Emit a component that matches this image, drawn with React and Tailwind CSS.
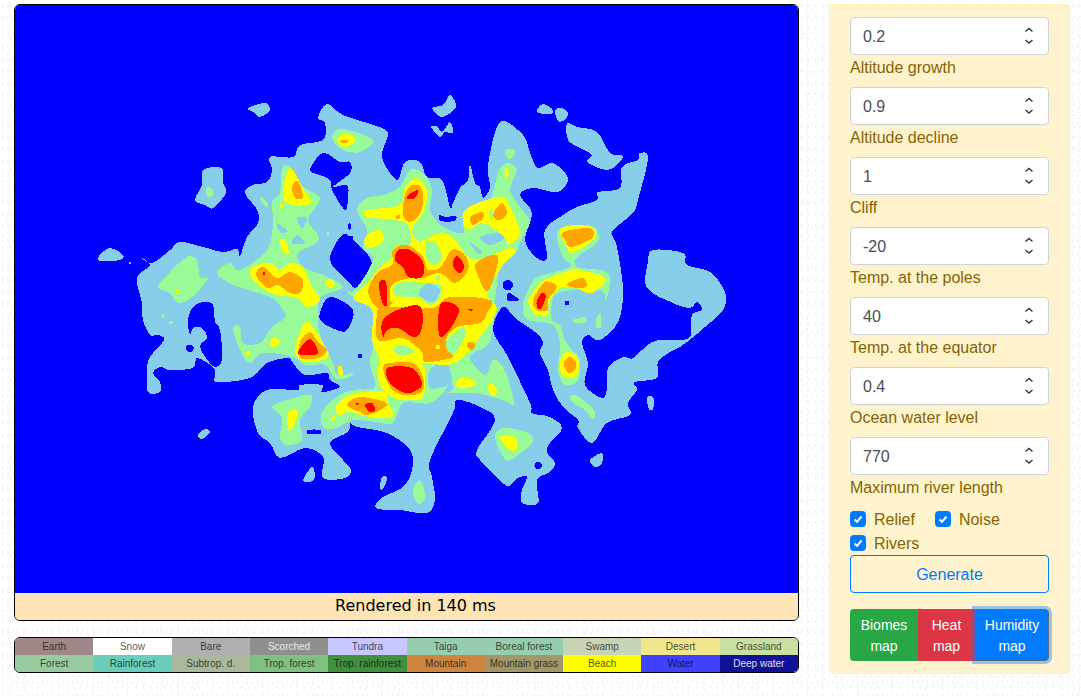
const SKY = "#87ceeb";
const GREEN = "#98fb98";
const YELLOW = "#ffff00";
const ORANGE = "#ffa500";
const RED = "#ff0000";
const WATER = "#0000ff";

// map shapes in page coordinates, painted bottom to top
const layers = [
  [SKY, [
    "137,278 150,265 140,257 152,263 170,250 180,242 203,247 223,252 237,249 240,256 247,237 258,223 257,210 245,193 253,185 267,182 272,170 270,157 293,157 300,145 323,140 325,123 318,118 327,104 343,115 373,125 388,133 382,157 397,180 405,162 420,162 427,177 442,180 450,207 453,203 460,188 468,180 470,165 475,183 480,187 483,198 490,187 488,165 500,122 523,135 530,153 538,168 553,163 568,178 558,192 533,188 520,195 532,213 525,240 537,258 547,258 545,230 563,215 577,207 597,200 598,192 620,188 622,167 638,160 640,153 648,158 638,200 633,213 613,230 613,237 617,247 623,290 618,322 600,340 588,335 582,343 588,363 585,385 602,398 607,388 608,368 623,357 633,358 652,342 673,340 690,337 692,315 702,310 697,302 690,308 673,303 647,288 648,262 653,250 683,253 687,265 710,272 725,292 723,310 705,327 692,338 680,347 670,352 658,362 657,378 635,382 637,390 628,403 630,415 607,423 592,443 578,428 578,420 563,407 553,390 548,370 540,353 543,342 535,332 515,318 503,307 493,330 508,357 530,403 532,413 550,417 562,428 550,443 547,452 555,463 550,472 537,480 538,503 522,503 522,490 527,477 518,478 507,486 490,470 480,460 477,450 495,420 480,407 457,400 453,413 430,460 432,477 435,500 427,513 400,510 387,510 375,507 383,497 403,487 412,470 410,450 387,433 357,427 350,423 348,432 330,443 343,460 351,470 345,478 323,478 323,457 305,448 280,458 270,443 258,433 253,407 267,390 297,390 300,385 322,385 322,392 340,387 330,380 327,373 305,375 293,363 288,358 267,363 250,378 217,382 215,375 213,367 197,358 193,368 170,370 160,367 153,373 160,382 160,392 148,392 147,370 150,357 164,340 158,335 150,335 143,320 142,303",
    "248,108 265,103 270,110 260,117 253,112",
    "195,200 202,185 203,170 222,168 223,182 226,193 213,208 205,205",
    "99,256 110,248 123,255 120,260 100,261",
    "432,108 443,105 450,95 456,107 442,117",
    "431,127 437,126 442,132 450,122 453,133 445,132 440,137",
    "537,112 543,104 553,110 550,114",
    "555,110 562,108 568,113 565,120 558,121",
    "567,123 577,127 597,132 610,153 622,155 620,162 607,170 587,162 592,155 580,148 568,140",
    "647,397 654,398 653,409 649,409",
    "590,460 602,453 602,463 595,467",
    "198,435 205,429 210,432 202,439",
    "303,480 312,467 315,477 310,482",
    "380,488 382,477 387,478 383,489",
  ]],
  [WATER, [
    "188,320 193,307 203,302 213,305 215,322 220,330 222,360 213,366 200,347 207,338 202,328 193,328 190,335",
    "310,170 323,153 340,162 350,162 350,173 333,187 347,185 348,197 345,210 332,190 330,180 320,175",
    "330,260 342,235 353,240 372,263 357,287 347,280",
    "320,313 330,297 353,310 347,330 337,330 322,322",
    "348,224 351,224 351,229 348,229",
    "349,236 353,236 353,240 349,240",
    "380,258 386,258 386,264 380,264",
    "186,346 191,345 194,348 191,352 187,351",
    "286,347 292,344 295,349 292,354 287,353",
    "358,354 362,354 362,358 358,358",
    "308,430 320,430 320,434 308,434",
    "439,215 446,217 456,216 454,221 441,221",
    "503,283 508,280 513,284 510,290 504,289",
    "508,293 513,295 519,300 508,301",
    "565,301 569,301 569,305 565,305",
    "535,463 540,462 542,466 539,469 535,468",
  ]],
  [GREEN, [
    "282,168 290,167 303,187 320,198 308,220 317,233 317,243 298,253 303,267 323,275 343,287 320,297 318,308 318,325 322,340 333,363 337,375 353,373 347,378 335,378 325,365 305,365 293,357 263,353 250,363 240,350 233,328 240,327 243,343 260,343 272,327 285,318 283,310 272,298 248,290 227,282 217,272 230,263 240,270 267,250 273,223 272,202 280,193",
    "357,210 367,198 383,195 400,187 410,170 423,173 432,190 430,210 443,227 463,233 463,220 470,207 490,200 498,173 507,163 517,170 510,190 520,207 530,222 522,237 515,253 500,265 497,283 493,317 492,330 488,345 470,357 485,375 493,360 503,367 510,385 514,405 505,401 477,393 450,393 453,387 447,363 430,370 430,388 447,387 430,403 403,403 393,423 377,422 353,420 337,428 323,427 322,412 337,397 353,390 375,387 370,363 375,340 377,320 372,303 355,298 347,290 355,290 373,260 363,247 367,230",
    "538,277 570,267 563,257 557,237 563,227 587,225 597,230 597,243 577,257 577,267 600,270 610,277 606,300 600,290 560,292 552,303 552,320 560,325 565,340 572,350 580,360 578,380 565,385 558,370 560,345 553,325 528,320 523,310 525,297 532,283",
    "158,287 170,272 187,257 197,260 200,277 208,279 192,297 178,303 170,293",
    "272,407 287,400 310,395 310,407 300,420 302,440 287,445 280,437 282,418",
    "413,490 420,480 425,493 423,502 417,503",
    "495,437 503,428 528,433 532,443 510,460 502,455",
    "570,397 575,395 587,403 595,412 593,419 585,410 573,403",
    "505,150 515,150 512,158 507,158",
    "332,138 342,129 373,140 360,152 343,150",
    "207,187 213,190 212,196 207,196",
    "573,320 585,317 585,323 575,323",
    "597,317 601,313 601,327 596,327",
    "260,198 263,198 268,205 265,206",
    "161,315 164,314 165,318 162,318",
    "169,322 173,321 172,324 169,324",
    "327,232 329,232 329,236 327,236",
  ]],
  [SKY, [
    "277,223 287,231 280,232",
    "297,218 307,218 302,228",
    "292,243 297,235 305,243",
    "480,237 497,233 505,238 490,245",
    "470,242 482,252 477,253",
  ]],
  [YELLOW, [
    "367,217 367,210 400,205 405,187 417,178 427,192 423,213 413,228 423,240 440,233 453,238 470,258 487,257 510,248 515,253 503,265 488,290 490,300 497,310 483,333 455,363 423,363 425,370 423,397 407,400 393,398 382,388 377,370 380,361 372,340 372,310 353,298 368,283 378,270 392,257 395,247 410,245 408,225 395,220",
    "338,403 357,393 385,392 387,400 393,417 370,417 350,412 338,415",
    "365,237 380,230 383,242 368,248",
    "463,213 478,203 503,197 510,207 520,233 508,245 505,237 483,223 467,230",
    "505,168 509,170 507,178 505,177",
    "560,230 577,225 593,228 595,238 573,253 567,247",
    "537,287 545,280 570,270 580,270 605,278 597,290 588,293 573,287 557,290 548,307 548,315 537,315 528,302",
    "287,172 293,170 302,187 312,203 293,205 283,197",
    "280,205 283,204 284,208 281,209",
    "280,240 285,240 289,253 283,252",
    "250,275 257,265 272,263 280,270 290,263 303,268 312,287 320,300 307,307 297,298 270,293",
    "325,282 330,279 335,284 330,288",
    "337,140 345,133 356,140 345,147",
    "176,290 179,291 181,294 176,294",
    "300,332 308,322 323,343 328,357 307,362 295,353",
    "270,342 275,337 280,342 273,347",
    "246,352 250,351 249,356 246,355",
    "338,367 341,366 343,374 339,375",
    "288,413 297,410 297,417 292,429 288,428",
    "331,419 335,416 335,419 332,421",
    "457,380 465,377 476,383 467,388 457,387",
    "488,388 493,383 497,392 492,396",
    "499,367 502,367 502,370 499,370",
    "500,437 515,437 517,448 510,450",
    "560,360 567,352 577,357 579,370 572,378 562,375",
  ]],
  [GREEN, [
    "412,230 422,228 423,240 417,240",
    "425,243 435,242 442,257 435,265 427,258",
    "393,287 403,282 422,283 440,285 440,297 430,305 420,298 407,297 395,295",
    "447,340 463,327 465,337 455,353 447,350",
    "395,347 403,345 415,352 402,355 395,353",
    "436,276 440,276 440,280 436,280",
    "489,212 492,210 493,216 489,216",
  ]],
  [SKY, ["419,292 428,283 440,290 433,302 422,298"]],
  [ORANGE, [
    "368,292 378,272 392,265 393,250 407,245 423,257 427,269 440,268 452,250 465,255 468,270 455,283 440,273 423,278 410,278 392,285 390,300 393,303 380,310",
    "380,310 390,307 432,308 450,297 490,300 487,313 480,323 457,327 447,337 447,350 453,357 425,362 422,352 403,338 378,340 377,313",
    "477,262 498,256 488,291 477,273",
    "467,343 475,343 473,350 468,348",
    "383,368 390,363 413,363 423,377 422,392 403,395 390,387",
    "403,205 408,188 418,185 423,193 422,208 415,220 405,220",
    "396,216 400,215 399,219 396,219",
    "470,217 482,212 483,218 473,225",
    "494,212 502,203 507,213 500,220 494,218",
    "563,232 590,228 593,237 583,243 570,247 565,240",
    "568,283 583,278 586,287 570,287",
    "533,300 545,282 557,287 548,300 548,310 537,310",
    "292,187 298,181 303,197 295,198",
    "256,275 263,267 277,278 290,272 303,280 300,293 290,293 278,285 267,288",
    "347,405 360,397 387,403 380,410 367,415 360,412",
    "300,342 310,332 318,342 327,350 318,358 300,358",
    "341,140 347,140 347,143 341,143",
    "564,362 570,357 576,362 575,370 569,373 565,368",
  ]],
  [YELLOW, ["436,345 440,345 440,349 436,349"]],
  [RED, [
    "387,368 412,368 422,383 417,390 405,393 390,383",
    "382,322 393,312 417,305 423,317 420,333 413,337 398,328 387,330 383,337",
    "440,305 452,303 459,312 447,333 439,335",
    "395,260 398,250 410,250 423,262 422,277 408,277 403,267",
    "453,262 457,256 464,265 461,273 455,270",
    "379,283 386,282 387,305 382,302",
    "408,195 418,190 415,198 408,199",
    "537,300 542,293 546,296 541,309 537,307",
    "263,272 265,272 265,275 263,275",
    "365,405 372,403 375,410 370,412",
    "356,403 359,403 358,405 356,405",
    "305,342 312,340 318,353 307,355 298,353",
    "468,309 473,309 471,311",
  ]],
];

// closed catmull-rom curve through the points, so coasts don't look faceted
const smoothPath = (points) => {
  const p = points.split(" ").map((s) => s.split(",").map(Number));
  const n = p.length;
  let d = `M${p[0][0]} ${p[0][1]}`;
  for (let i = 0; i < n; i++) {
    const a = p[(i - 1 + n) % n];
    const b = p[i];
    const c = p[(i + 1) % n];
    const e = p[(i + 2) % n];
    const c1 = [b[0] + (c[0] - a[0]) / 6, b[1] + (c[1] - a[1]) / 6];
    const c2 = [c[0] - (e[0] - b[0]) / 6, c[1] - (e[1] - b[1]) / 6];
    d += `C${c1[0].toFixed(1)} ${c1[1].toFixed(1)} ${c2[0].toFixed(1)} ${c2[1].toFixed(1)} ${c[0]} ${c[1]}`;
  }
  return d + "Z";
};

const legend = [
  ["Earth", "bg-[#a08888]", "text-black/70"],
  ["Snow", "bg-white", "text-black/70"],
  ["Bare", "bg-[#b0b0b0]", "text-black/70"],
  ["Scorched", "bg-[#8f8f8f]", "text-white/80"],
  ["Tundra", "bg-[#c8c8ff]", "text-black/70"],
  ["Taiga", "bg-[#96ceb0]", "text-black/70"],
  ["Boreal forest", "bg-[#96ceb0]", "text-black/70"],
  ["Swamp", "bg-[#c8d4b6]", "text-black/70"],
  ["Desert", "bg-[#f0e68c]", "text-black/70"],
  ["Grassland", "bg-[#c8e0a0]", "text-black/70"],
  ["Forest", "bg-[#98cca0]", "text-black/70"],
  ["Rainforest", "bg-[#6ccdb8]", "text-black/70"],
  ["Subtrop. d.", "bg-[#aab89c]", "text-black/70"],
  ["Trop. forest", "bg-[#80c080]", "text-black/70"],
  ["Trop. rainforest", "bg-[#409040]", "text-black/70"],
  ["Mountain", "bg-[#cd853f]", "text-black/70"],
  ["Mountain grass", "bg-[#a09868]", "text-black/70"],
  ["Beach", "bg-[#ffff00]", "text-black/70"],
  ["Water", "bg-[#4040ff]", "text-black/70"],
  ["Deep water", "bg-[#101098]", "text-white/85"],
];

const fields = [
  ["0.2", "Altitude growth"],
  ["0.9", "Altitude decline"],
  ["1", "Cliff"],
  ["-20", "Temp. at the poles"],
  ["40", "Temp. at the equator"],
  ["0.4", "Ocean water level"],
  ["770", "Maximum river length"],
];

const Spinner = () => (
  <svg width="10" height="18" viewBox="0 0 10 18" fill="none" stroke="#343a40" strokeWidth="1.5">
    <path d="M1.5 4.5 5 1.5 8.5 4.5" />
    <path d="M1.5 13 5 16 8.5 13" />
  </svg>
);

const Check = ({ label, className = "" }) => (
  <label className={`flex items-center h-6 ${className}`}>
    <span className="flex items-center justify-center w-4 h-4 rounded-[4px] bg-[#007bff]">
      <svg width="10" height="10" viewBox="0 0 10 10" fill="none" stroke="#fff" strokeWidth="2">
        <path d="M1.5 5.5 4 7.8 8.5 2.5" />
      </svg>
    </span>
    <span className="ml-2 pt-[2px]">{label}</span>
  </label>
);

export default function App() {
  return (
    <div className="flex items-start w-full h-[696px] overflow-hidden bg-white bg-[radial-gradient(#f2f2f2_1px,transparent_1px),radial-gradient(#f5f5f5_1px,transparent_1px),radial-gradient(#f3f3f3_1px,transparent_1px)] bg-size-[7px_11px,5px_13px,17px_3px] font-['Liberation_Sans',sans-serif]">
      <div className="ml-[14px] mt-1 w-[785px] shrink-0">
        <div className="border border-black rounded-[6px] overflow-hidden">
          <svg className="block" width="783" height="588" viewBox="15 5 783 588" shapeRendering="crispEdges">
            <rect x="15" y="5" width="783" height="588" fill={WATER} />
            {layers.map(([color, shapes], i) =>
              shapes.map((points, j) => <path key={`${i}-${j}`} d={smoothPath(points)} fill={color} />)
            )}
            <circle cx="130" cy="263" r="1" fill={SKY} />
          </svg>
          <div className="h-[27px] flex items-center justify-center pl-[18px] pb-[2px] bg-[#ffe4b5] text-base text-black font-['DejaVu_Sans',sans-serif]">
            Rendered in 140 ms
          </div>
        </div>

        <div className="mt-4 border border-black rounded-[6px] overflow-hidden grid grid-cols-10 text-[10px] leading-[17px] text-center">
          {legend.map(([name, bg, color]) => (
            <div key={name} className={`h-[17px] whitespace-nowrap ${bg} ${color}`}>
              {name}
            </div>
          ))}
        </div>
      </div>

      <div className="ml-[30px] mt-1 w-[241px] h-[670px] shrink-0 rounded-[4px] bg-[#fff3cd] border border-[#ffeeba] pt-3 pl-5 pr-5 text-base text-[#856404]">
        {fields.map(([value, label]) => (
          <div key={label} className="mb-2">
            <div className="flex items-center justify-between h-[38px] w-[199px] pl-3 pr-[14px] rounded-[4px] bg-white border border-[#ced4da] text-[#495057]">
              <span className="pt-[2px]">{value}</span>
              <Spinner />
            </div>
            <div className="h-6 pt-px leading-6">{label}</div>
          </div>
        ))}

        <div className="flex flex-wrap w-[199px]">
          <Check label="Relief" className="mr-5" />
          <Check label="Noise" className="mr-5" />
          <Check label="Rivers" />
        </div>

        <button className="block w-[199px] h-[38px] pt-[2px] rounded-[4px] border border-[#007bff] text-[#007bff]">
          Generate
        </button>

        <div className="flex mt-4 w-[199px] text-sm leading-[21px] text-white text-center">
          <div className="w-[68px] pt-[6px] pb-1 rounded-l-[4px] bg-[#28a745]">Biomes map</div>
          <div className="w-[57px] pt-[6px] pb-1 bg-[#dc3545]">Heat map</div>
          <div className="w-[74px] pt-[5px] pb-[3px] rounded-r-[4px] bg-[#007bff] border border-[#5a6a7a] ring-[3px] ring-[#007bff]/40">
            Humidity map
          </div>
        </div>
      </div>
    </div>
  );
}
